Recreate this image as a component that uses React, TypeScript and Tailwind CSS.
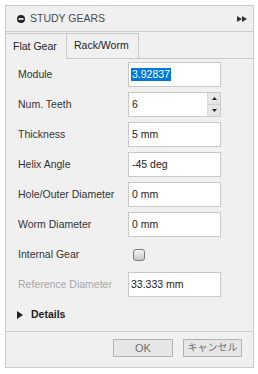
import type { ReactNode } from "react";

const FONT = { fontFamily: '"Liberation Sans", Arial, "Noto Sans CJK JP", sans-serif' };

type Row = { label: string; value: string };

const ROWS: Row[] = [
  { label: "Thickness", value: "5 mm" },
  { label: "Helix Angle", value: "-45 deg" },
  { label: "Hole/Outer Diameter", value: "0 mm" },
  { label: "Worm Diameter", value: "0 mm" },
];

function Field({ label, muted, children }: { label: string; muted?: boolean; children: ReactNode }) {
  return (
    <div className="flex h-[25px] items-center">
      <span
        className={`w-[110px] shrink-0 whitespace-nowrap text-[10.5px] ${muted ? "text-[#a8a8a8]" : "text-[#333]"}`}
      >
        {label}
      </span>
      {children}
    </div>
  );
}

function Box({ children }: { children: ReactNode }) {
  return (
    <div className="relative flex h-[25px] w-[93px] items-center border border-[#c9c9c9] bg-white pl-[2px] text-[10.5px] text-[#222]">
      {children}
    </div>
  );
}

export default function App() {
  return (
    <div className="h-[374px] w-[258px] bg-white pl-[5px] pt-[5px]" style={FONT}>
      <div className="flex h-[363px] w-[249px] flex-col border border-[#c9c9c9] bg-[#f0f0f0]">
        {/* title bar */}
        <div className="flex h-[26px] items-center border-b border-[#c9c9c9] pl-[11px] pr-[5px]">
          <svg width="8" height="8" viewBox="0 0 8 8" className="mr-[5px]">
            <circle cx="4" cy="4" r="4" fill="#222" />
            <rect x="1.5" y="3.2" width="5" height="1.6" fill="#fff" />
          </svg>
          <span className="text-[10.5px] text-[#4a4a4a]">STUDY GEARS</span>
          <svg width="10" height="6" viewBox="0 0 10 6" className="ml-auto mr-[1px]">
            <polygon points="0,0 5,3 0,6" fill="#333" />
            <polygon points="5,0 10,3 5,6" fill="#333" />
          </svg>
        </div>

        {/* tabs */}
        <div className="mt-[1px] flex h-[26px]">
          <div className="flex w-[61px] items-center border-r border-t border-[#c9c9c9] pl-[7px] text-[10.5px] text-[#222]">
            Flat Gear
          </div>
          <div className="flex w-[72px] items-center border-b border-r border-t border-[#c9c9c9] pl-[7px] text-[10.5px] text-[#222]">
            Rack/Worm
          </div>
          <div className="flex-1 border-b border-[#c9c9c9]" />
        </div>

        {/* fields */}
        <div className="mt-[3px] flex flex-col gap-[5px] pl-[12px]">
          <Field label="Module">
            <Box>
              <span className="bg-[#0078d7] px-[1px] leading-[13px] text-white">3.92837</span>
            </Box>
          </Field>
          <Field label="Num. Teeth">
            <Box>
              <span className="pl-[1px]">6</span>
              <div className="absolute bottom-0 right-0 top-0 flex w-[13px] flex-col border-l border-[#dcdcdc] bg-[#e6e6e6]">
                <div className="flex flex-1 items-center justify-center border-b border-[#d0d0d0]">
                  <svg width="5" height="3" viewBox="0 0 5 3">
                    <polygon points="2.5,0 5,3 0,3" fill="#222" />
                  </svg>
                </div>
                <div className="flex flex-1 items-center justify-center">
                  <svg width="5" height="3" viewBox="0 0 5 3">
                    <polygon points="0,0 5,0 2.5,3" fill="#222" />
                  </svg>
                </div>
              </div>
            </Box>
          </Field>
          {ROWS.map((r) => (
            <Field key={r.label} label={r.label}>
              <Box>
                <span className="pl-[1px]">{r.value}</span>
              </Box>
            </Field>
          ))}
          <Field label="Internal Gear">
            <div className="ml-[5px] h-[12px] w-[12px] rounded-[3px] border border-[#7a7a7a] bg-gradient-to-b from-[#f4f4f4] to-[#c8c8c8]" />
          </Field>
          <Field label="Reference Diameter" muted>
            <Box>
              <span>33.333 mm</span>
            </Box>
          </Field>
        </div>

        {/* details */}
        <div className="mt-[5px] flex h-[25px] items-center pl-[11px]">
          <svg width="6" height="8" viewBox="0 0 6 8" className="mr-[8px]">
            <polygon points="0,0 6,4 0,8" fill="#222" />
          </svg>
          <span className="text-[10.5px] font-bold text-[#222]">Details</span>
        </div>

        {/* footer */}
        <div className="mt-[4px] flex justify-end gap-[10px] border-t border-[#c9c9c9] pr-[11px] pt-[7px]">
          <button className="h-[18px] w-[60px] whitespace-nowrap border border-[#b4b4b4] bg-[#e6e6e6] text-[11px] leading-[16px] text-[#707070]">
            OK
          </button>
          <button className="h-[18px] w-[59px] whitespace-nowrap border border-[#b4b4b4] bg-[#e6e6e6] text-[10px] leading-[16px] text-[#707070]">
            キャンセル
          </button>
        </div>
      </div>
    </div>
  );
}
